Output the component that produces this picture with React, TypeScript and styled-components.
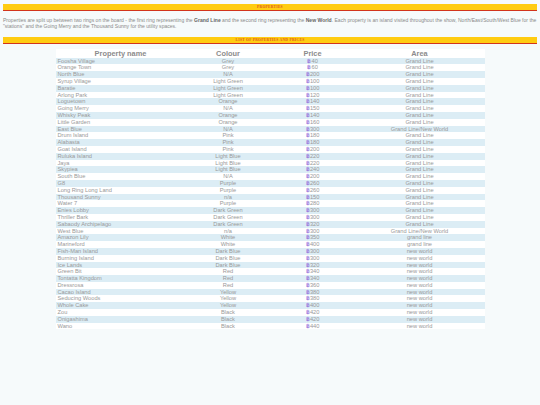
import React from "react";
import styled, { createGlobalStyle } from "styled-components";

const GlobalStyle = createGlobalStyle`
  html, body {
    margin: 0;
    padding: 0;
    background: #f6fafb;
  }
  body {
    font-family: "Liberation Sans", Arial, sans-serif;
  }
`;

const Page = styled.div`
  padding: 4px 3px 20px;
  display: flex;
  flex-direction: column;
`;

const SectionBar = styled.div`
  background: #ffcc11;
  border-bottom: 1.5px solid #d2341c;
  height: 6px;
  display: flex;
  align-items: center;
  justify-content: center;
  font-family: "Liberation Serif", "Times New Roman", serif;
  font-weight: bold;
  font-size: 3.6px;
  letter-spacing: 0.3px;
  color: #e0561c;
  text-transform: uppercase;
`;

const Intro = styled.p`
  margin: 5.5px 0 8.5px;
  font-size: 5.05px;
  line-height: 6.2px;
  color: #8a8a8a;

  b {
    color: #666;
  }
`;

const Table = styled.table`
  width: 429px;
  margin: 5px auto 0;
  border-collapse: collapse;
  background: #ffffff;
  font-size: 5.7px;
  color: #999;
`;

const Th = styled.th`
  font-size: 7.4px;
  font-weight: bold;
  color: #8c8c8c;
  height: 8.2px;
  padding: 0;
  line-height: 8px;
`;

const Row = styled.tr<{ $alt: boolean }>`
  background: ${(p) => (p.$alt ? "#dcedf5" : "#ffffff")};
  height: 6.8px;
`;

const Td = styled.td<{ $align?: string }>`
  padding: 0 2px;
  line-height: 6.8px;
  text-align: ${(p) => p.$align || "center"};
  white-space: nowrap;
`;

const Berry = styled.span`
  color: #8a60d8;
  margin-right: 0.3px;
`;

const props: [string, string, number, string][] = [
  ["Foosha Village", "Grey", 40, "Grand Line"],
  ["Orange Town", "Grey", 60, "Grand Line"],
  ["North Blue", "N/A", 200, "Grand Line"],
  ["Syrup Village", "Light Green", 100, "Grand Line"],
  ["Baratie", "Light Green", 100, "Grand Line"],
  ["Arlong Park", "Light Green", 120, "Grand Line"],
  ["Loguetown", "Orange", 140, "Grand Line"],
  ["Going Merry", "N/A", 150, "Grand Line"],
  ["Whisky Peak", "Orange", 140, "Grand Line"],
  ["Little Garden", "Orange", 160, "Grand Line"],
  ["East Blue", "N/A", 300, "Grand Line/New World"],
  ["Drum Island", "Pink", 180, "Grand Line"],
  ["Alabasta", "Pink", 180, "Grand Line"],
  ["Goat Island", "Pink", 200, "Grand Line"],
  ["Ruluka Island", "Light Blue", 220, "Grand Line"],
  ["Jaya", "Light Blue", 220, "Grand Line"],
  ["Skypiea", "Light Blue", 240, "Grand Line"],
  ["South Blue", "N/A", 200, "Grand Line"],
  ["G8", "Purple", 260, "Grand Line"],
  ["Long Ring Long Land", "Purple", 260, "Grand Line"],
  ["Thousand Sunny", "n/a", 150, "Grand Line"],
  ["Water 7", "Purple", 280, "Grand Line"],
  ["Enies Lobby", "Dark Green", 300, "Grand Line"],
  ["Thriller Bark", "Dark Green", 300, "Grand Line"],
  ["Sabaody Archipelago", "Dark Green", 320, "Grand Line"],
  ["West Blue", "n/a", 300, "Grand Line/New World"],
  ["Amazon Lily", "White", 350, "grand line"],
  ["Marineford", "White", 400, "grand line"],
  ["Fish-Man Island", "Dark Blue", 300, "new world"],
  ["Burning Island", "Dark Blue", 300, "new world"],
  ["Ice Lands", "Dark Blue", 320, "new world"],
  ["Green Bit", "Red", 340, "new world"],
  ["Tontatta Kingdom", "Red", 340, "new world"],
  ["Dressrosa", "Red", 360, "new world"],
  ["Cacao Island", "Yellow", 380, "new world"],
  ["Seducing Woods", "Yellow", 380, "new world"],
  ["Whole Cake", "Yellow", 400, "new world"],
  ["Zou", "Black", 420, "new world"],
  ["Onigashima", "Black", 420, "new world"],
  ["Wano", "Black", 440, "new world"],
];

export default function App() {
  return (
    <Page>
      <GlobalStyle />
      <SectionBar>Properties</SectionBar>
      <Intro>
        Properties are split up between two rings on the board - the first ring representing the{" "}
        <b>Grand Line</b> and the second ring representing the <b>New World</b>. Each property is an
        island visited throughout the show, North/East/South/West Blue for the "stations" and the
        Going Merry and the Thousand Sunny for the utility spaces.
      </Intro>
      <SectionBar>List of properties and prices</SectionBar>
      <Table>
        <colgroup>
          <col style={{ width: 130 }} />
          <col style={{ width: 85 }} />
          <col style={{ width: 84 }} />
          <col style={{ width: 130 }} />
        </colgroup>
        <thead>
          <tr>
            <Th>Property name</Th>
            <Th>Colour</Th>
            <Th>Price</Th>
            <Th>Area</Th>
          </tr>
        </thead>
        <tbody>
          {props.map(([name, colour, price, area], i) => (
            <Row key={name} $alt={i % 2 === 0}>
              <Td $align="left">{name}</Td>
              <Td>{colour}</Td>
              <Td>
                <Berry>฿</Berry>
                {price}
              </Td>
              <Td>{area}</Td>
            </Row>
          ))}
        </tbody>
      </Table>
    </Page>
  );
}
